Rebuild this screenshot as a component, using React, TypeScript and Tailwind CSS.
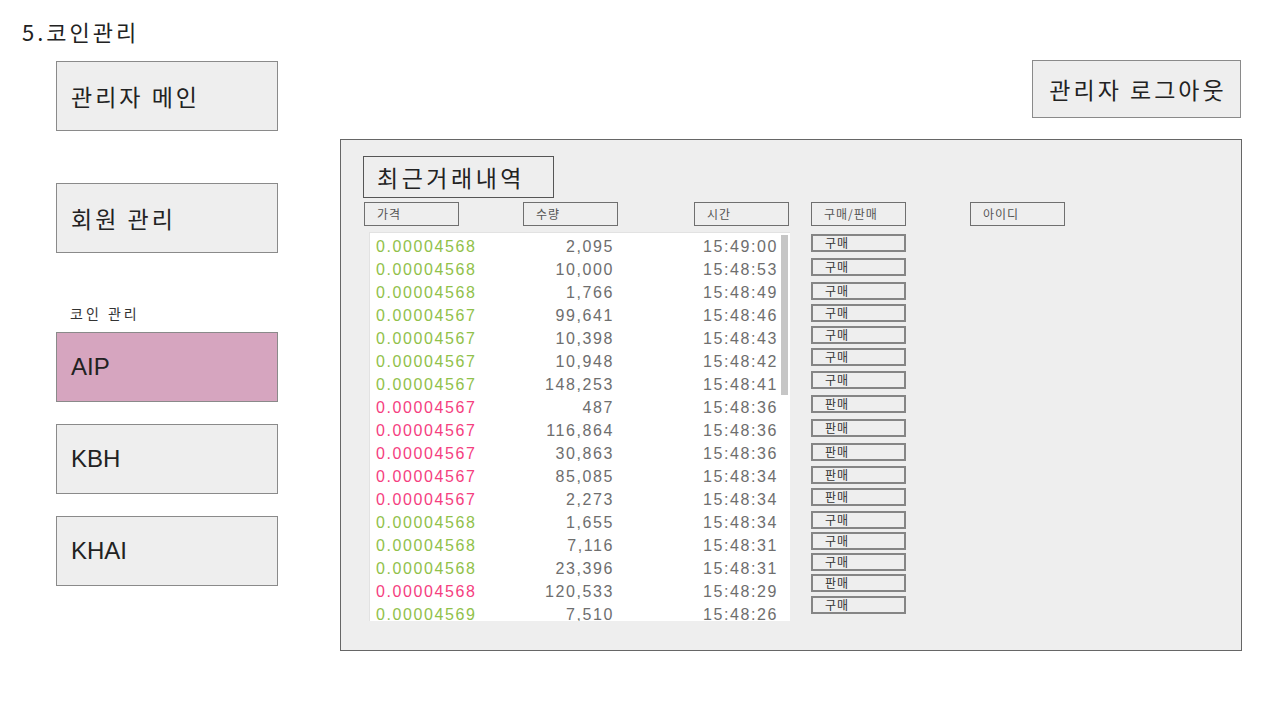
const trades = [
  { price: '0.00004568', qty: '2,095', time: '15:49:00', side: '구매', mt: 'mt-[2px]' },
  { price: '0.00004568', qty: '10,000', time: '15:48:53', side: '구매', mt: 'mt-[6px]' },
  { price: '0.00004568', qty: '1,766', time: '15:48:49', side: '구매', mt: 'mt-[6px]' },
  { price: '0.00004567', qty: '99,641', time: '15:48:46', side: '구매', mt: 'mt-[4px]' },
  { price: '0.00004567', qty: '10,398', time: '15:48:43', side: '구매', mt: 'mt-[4px]' },
  { price: '0.00004567', qty: '10,948', time: '15:48:42', side: '구매', mt: 'mt-[4px]' },
  { price: '0.00004567', qty: '148,253', time: '15:48:41', side: '구매', mt: 'mt-[5px]' },
  { price: '0.00004567', qty: '487', time: '15:48:36', side: '판매', mt: 'mt-[6px]' },
  { price: '0.00004567', qty: '116,864', time: '15:48:36', side: '판매', mt: 'mt-[6px]' },
  { price: '0.00004567', qty: '30,863', time: '15:48:36', side: '판매', mt: 'mt-[6px]' },
  { price: '0.00004567', qty: '85,085', time: '15:48:34', side: '판매', mt: 'mt-[5px]' },
  { price: '0.00004567', qty: '2,273', time: '15:48:34', side: '판매', mt: 'mt-[4px]' },
  { price: '0.00004568', qty: '1,655', time: '15:48:34', side: '구매', mt: 'mt-[5px]' },
  { price: '0.00004568', qty: '7,116', time: '15:48:31', side: '구매', mt: 'mt-[3px]' },
  { price: '0.00004568', qty: '23,396', time: '15:48:31', side: '구매', mt: 'mt-[3px]' },
  { price: '0.00004568', qty: '120,533', time: '15:48:29', side: '판매', mt: 'mt-[3px]' },
  { price: '0.00004569', qty: '7,510', time: '15:48:26', side: '구매', mt: 'mt-[4px]' },
];

const kr = "font-['Noto_Sans_CJK_KR','Noto_Sans',sans-serif]";
const latin = "font-['Liberation_Sans',Arial,sans-serif]";

const NavBox = ({ label, active, roman }: { label: string; active?: boolean; roman?: boolean }) => (
  <div
    className={`flex h-[70px] w-[222px] items-center border border-[#8a8a8a] pl-[14px] text-[#222] ${
      active ? 'bg-[#d6a5bf]' : 'bg-[#eeeeee]'
    } ${roman ? `${latin} text-[24px]` : 'text-[23px] tracking-[3px]'}`}
  >
    {label}
  </div>
);

const HeaderCell = ({ label, className }: { label: string; className: string }) => (
  <div
    className={`flex h-[24px] w-[95px] items-center border border-[#6f6f6f] pl-[12px] text-[12px] tracking-[1px] text-[#555] ${className}`}
  >
    {label}
  </div>
);

const App = () => {
  return (
    <div className={`h-[715px] w-[1264px] bg-white ${kr}`}>
      <div className="h-[61px] pl-[22px] pt-[17px] text-[22px] leading-[28px] tracking-[3px] text-[#222]">
        5.코인관리
      </div>

      <div className="flex">
        <div className="ml-[56px] flex w-[222px] flex-col">
          <NavBox label="관리자 메인" />
          <div className="mt-[52px]">
            <NavBox label="회원 관리" />
          </div>
          <div className="mt-[52px] h-[16px] pl-[14px] text-[14px] leading-[16px] tracking-[3px] text-[#333]">
            코인 관리
          </div>
          <div className="mt-[11px]">
            <NavBox label="AIP" active roman />
          </div>
          <div className="mt-[22px]">
            <NavBox label="KBH" roman />
          </div>
          <div className="mt-[22px]">
            <NavBox label="KHAI" roman />
          </div>
        </div>

        <div className="flex flex-1 flex-col">
          <div className="flex justify-end pr-[23px]">
            <div className="-mt-[1px] flex h-[58px] w-[209px] items-center justify-center border border-[#8a8a8a] bg-[#eeeeee] pl-[3px] text-[23px] tracking-[3px] text-[#222]">
              관리자 로그아웃
            </div>
          </div>

          <div className="ml-[62px] mt-[21px] h-[512px] w-[902px] border border-[#666] bg-[#eeeeee] pl-[22px] pt-[16px]">
            <div className="flex h-[42px] w-[191px] items-center border border-[#555] pl-[13px] text-[23px] tracking-[3.5px] text-[#222]">
              최근거래내역
            </div>

            <div className="mt-[4px] flex">
              <HeaderCell label="가격" className="ml-[1px]" />
              <HeaderCell label="수량" className="ml-[64px]" />
              <HeaderCell label="시간" className="ml-[76px]" />
              <HeaderCell label="구매/판매" className="ml-[22px]" />
              <HeaderCell label="아이디" className="ml-[64px]" />
            </div>

            <div className="mt-[6px] flex">
              <div
                className={`ml-[6px] flex h-[389px] w-[421px] overflow-hidden border-l border-t border-[#e2e2e2] bg-white ${latin} text-[16px] tracking-[1.6px]`}
              >
                <div className="flex-1 pt-[2px]">
                  {trades.map((t, i) => (
                    <div key={i} className="flex h-[23px] items-center">
                      <div
                        className={`w-[155px] pl-[6px] ${
                          t.side === '구매' ? 'text-[#91c14a]' : 'text-[#f5407f]'
                        }`}
                      >
                        {t.price}
                      </div>
                      <div className="w-[89px] text-right text-[#6e6e6e]">{t.qty}</div>
                      <div className="w-[164px] text-right text-[#6e6e6e]">{t.time}</div>
                    </div>
                  ))}
                </div>
                <div className="w-[9px] pr-[1px]">
                  <div className="mt-[2px] h-[160px] w-[7px] bg-[#c6c6c6]" />
                </div>
              </div>

              <div className="ml-[21px] flex flex-col">
                {trades.map((t, i) => (
                  <div
                    key={i}
                    className={`flex h-[18px] w-[95px] items-center border-2 border-[#858585] pl-[12px] text-[12px] leading-none tracking-[1px] text-[#333] ${t.mt}`}
                  >
                    {t.side}
                  </div>
                ))}
              </div>
            </div>
          </div>
        </div>
      </div>
    </div>
  );
};

export default App;
